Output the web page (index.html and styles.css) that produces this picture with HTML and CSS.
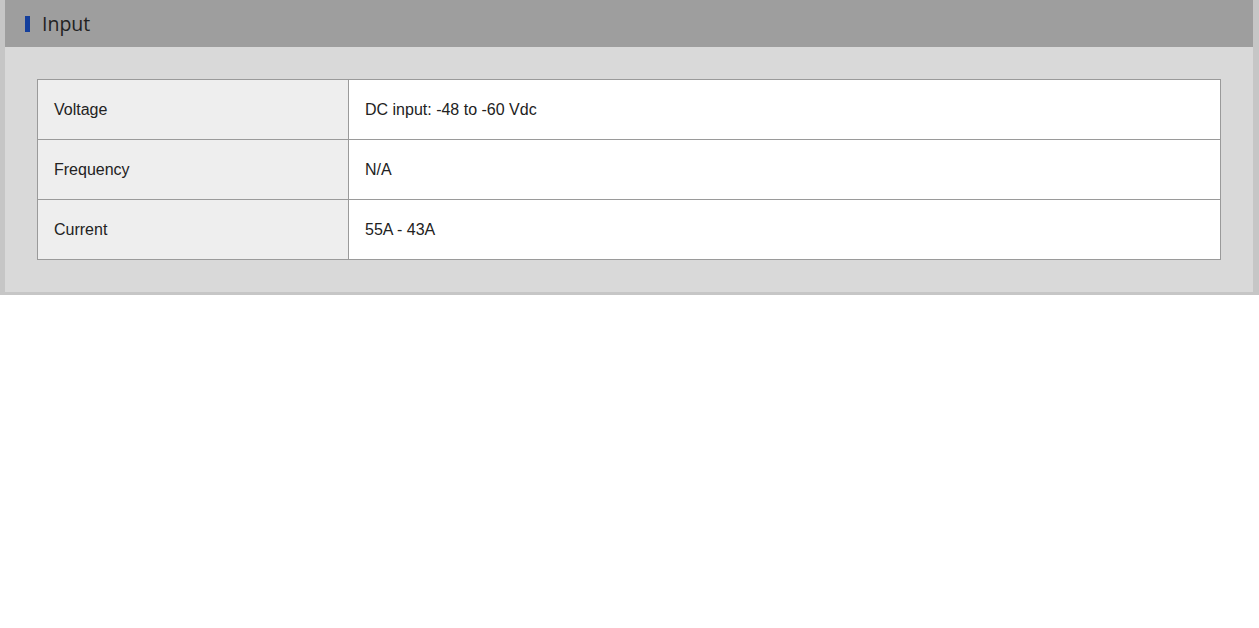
FILE: index.html
```html
<!DOCTYPE html>
<html>
<head>
<meta charset="utf-8">
<link rel="stylesheet" href="styles.css">
</head>
<body>
<section class="panel">
  <header class="panel-head">
    <span class="marker"></span>
    <h2 class="title">Input</h2>
  </header>
  <div class="panel-body">
    <table class="spec">
      <tr><th>Voltage</th><td>DC input: -48 to -60 Vdc</td></tr>
      <tr><th>Frequency</th><td>N/A</td></tr>
      <tr><th>Current</th><td>55A - 43A</td></tr>
    </table>
  </div>
</section>
</body>
</html>
```
FILE: styles.css
```css
html, body {
  margin: 0;
  padding: 0;
  background: #fff;
}
.panel {
  width: 1259px;
  box-sizing: border-box;
  border-left: 5px solid #c6c6c6;
  border-right: 6px solid #c6c6c6;
  border-bottom: 3px solid #c6c6c6;
  background: #d9d9d9;
}
.panel-head {
  height: 47px;
  background: #9e9e9e;
  display: flex;
  align-items: center;
  padding-left: 20px;
}
.marker {
  width: 5px;
  height: 16px;
  background: #143f9c;
  margin-right: 12px;
  margin-top: 1px;
}
.title {
  margin: 0;
  font-family: "Open Sans", "Noto Sans", sans-serif;
  font-weight: 400;
  font-size: 19.5px;
  color: #222;
  line-height: 1;
}
.panel-body {
  padding: 32px;
}
.spec {
  width: 100%;
  border-collapse: collapse;
  font-family: "Liberation Sans", Arial, sans-serif;
  font-size: 16px;
  color: #222;
}
.spec th, .spec td {
  border: 1px solid #9a9a9a;
  height: 60px;
  box-sizing: border-box;
  padding: 0 16px;
  text-align: left;
  font-weight: 400;
  vertical-align: middle;
}
.spec th {
  width: 311px;
  background: #eeeeee;
}
.spec td {
  background: #fff;
}
```
